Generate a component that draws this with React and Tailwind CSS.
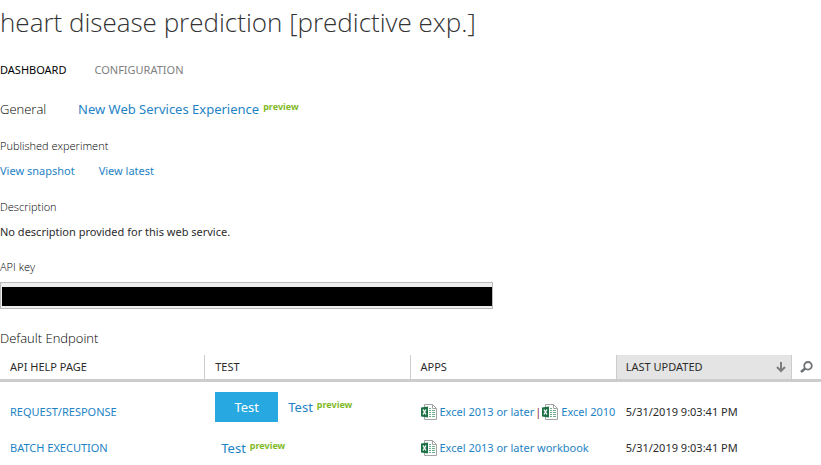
import { useState } from 'react'

const endpoints = [
  {
    id: 'rrs',
    name: 'REQUEST/RESPONSE',
    hasTestButton: true,
    apps: ['Excel 2013 or later', 'Excel 2010'],
    updated: '5/31/2019 9:03:41 PM',
  },
  {
    id: 'bes',
    name: 'BATCH EXECUTION',
    hasTestButton: false,
    apps: ['Excel 2013 or later workbook'],
    updated: '5/31/2019 9:03:41 PM',
  },
]

function ExcelIcon() {
  return (
    <svg className="mr-[3px] size-4 shrink-0" viewBox="0 0 16 16" aria-hidden="true">
      <path d="M3.5 3V.5h8l4 4v11h-12V13" fill="#fff" stroke="#a3a3a3" />
      <path d="M11.5.5v4h4" fill="none" stroke="#a3a3a3" />
      <path
        d="M8 6.5h2M11 6.5h3M8 8.5h2M11 8.5h3M8 10.5h2M11 10.5h3M8 12.5h2M11 12.5h3M8 4.5h2"
        stroke="#6fb08a"
      />
      <path d="M0 3.5 7 2.5v11L0 12.5z" fill="#1e7145" />
      <path d="m2 5.5 3 5M5 5.5l-3 5" stroke="#fff" strokeWidth="1.3" />
    </svg>
  )
}

function SortIcon() {
  return (
    <svg className="h-3 w-2.5" viewBox="0 0 10 12" fill="none" stroke="#7d7d7d" strokeWidth="2" aria-hidden="true">
      <path d="M5 1v9M1 6l4 4 4-4" />
    </svg>
  )
}

function SearchIcon() {
  return (
    <svg className="h-3 w-[13px]" viewBox="0 0 13 12" fill="none" stroke="#6e7378" aria-hidden="true">
      <circle cx="8" cy="4.8" r="3.8" strokeWidth="1.8" />
      <path d="M5.2 7.4 1 11" strokeWidth="2.6" />
    </svg>
  )
}

function Preview() {
  return <span className="ml-1 text-[9px] leading-4 font-bold text-[#7fba26]">preview</span>
}

function TestLink({ children }) {
  return (
    <span className="flex items-start">
      <a href="#test" className="text-[13px] leading-5 text-[#1e83c4]">{children}</a>
      <Preview />
    </span>
  )
}

function TestCell({ endpoint }) {
  if (!endpoint.hasTestButton) {
    return <div className="pl-1.5"><TestLink>Test</TestLink></div>
  }
  return (
    <div className="flex items-center gap-2.5 pt-0.5">
      <button type="button" className="h-[30px] w-[63px] bg-[#27a8e0] text-[13px] text-white">Test</button>
      <TestLink>Test</TestLink>
    </div>
  )
}

export default function App() {
  const [tab, setTab] = useState('DASHBOARD')

  return (
    <main className="bg-white font-['Noto_Sans','Open_Sans',sans-serif] text-[11px] leading-4 text-[#2b2b2b]">
      <h1 className="pt-1 font-['Open_Sans',sans-serif] text-[26px] leading-9 font-light text-[#333]">
        heart disease prediction [predictive exp.]
      </h1>

      <nav className="mt-[22px] flex gap-7">
        {['DASHBOARD', 'CONFIGURATION'].map((t) => (
          <button
            key={t}
            type="button"
            onClick={() => setTab(t)}
            className={tab === t ? 'text-black' : 'text-[#808080]'}
          >
            {t}
          </button>
        ))}
      </nav>

      <div className="mt-[21px] flex items-start">
        <h2 className="w-[78px] font-['Open_Sans',sans-serif] text-[13px] leading-5 font-light text-black">General</h2>
        <TestLink>New Web Services Experience</TestLink>
      </div>

      <section className="mt-[19px]">
        <h3 className="font-['Open_Sans',sans-serif] font-light text-black">Published experiment</h3>
        <div className="mt-[9px] flex gap-6 text-[#1e83c4]">
          <a href="#snapshot">View snapshot</a>
          <a href="#latest">View latest</a>
        </div>
      </section>

      <section className="mt-5">
        <h3 className="font-['Open_Sans',sans-serif] font-light text-black">Description</h3>
        <p className="mt-[9px]">No description provided for this web service.</p>
      </section>

      <section className="mt-[19px]">
        <label htmlFor="api-key" className="block font-['Open_Sans',sans-serif] font-light text-black">API key</label>
        <div className="mt-[7px] w-3/5 border border-[#bbb] bg-[#eee] pt-1 pb-0.5 pl-px">
          <input id="api-key" type="text" readOnly className="block h-[19px] w-full bg-black" />
        </div>
      </section>

      <h2 className="mt-[19px] font-['Open_Sans',sans-serif] text-[13px] leading-5 font-light text-black">Default Endpoint</h2>

      <table className="mt-[7px] w-full table-fixed border-separate border-spacing-0 text-left">
        <thead>
          <tr className="h-[27px] [&>th]:border-b-3 [&>th]:border-[#ccc] [&>th]:font-normal">
            <th className="w-1/4 border-r pl-2.5">API HELP PAGE</th>
            <th className="w-1/4 border-r pl-2.5">TEST</th>
            <th className="w-1/4 pl-2.5">APPS</th>
            <th className="border-x bg-[#e4e4e4] pr-[5px] pl-[9px]">
              <button type="button" className="flex w-full items-center justify-between">
                LAST UPDATED
                <SortIcon />
              </button>
            </th>
            <th className="w-[29px]">
              <button type="button" aria-label="Search" className="flex w-full justify-center">
                <SearchIcon />
              </button>
            </th>
          </tr>
        </thead>
        <tbody>
          {endpoints.map((e) => (
            <tr key={e.id} className="align-bottom whitespace-nowrap">
              <td className="pb-2.5 pl-2.5">
                <a href={`#${e.id}`} className="text-[#1e83c4]">{e.name}</a>
              </td>
              <td className="pt-2 pb-2 pl-2.5">
                <TestCell endpoint={e} />
              </td>
              <td className="pb-2.5 pl-2.5">
                <div className="flex items-center">
                  {e.apps.map((app, i) => (
                    <span key={app} className="flex items-center">
                      {i > 0 && <span className="mx-px text-[#8a2b2b]">|</span>}
                      <ExcelIcon />
                      <a href="#excel" className="text-[#1e83c4]">{app}</a>
                    </span>
                  ))}
                </div>
              </td>
              <td className="pb-2.5 pl-2.5">{e.updated}</td>
              <td />
            </tr>
          ))}
        </tbody>
      </table>
    </main>
  )
}
